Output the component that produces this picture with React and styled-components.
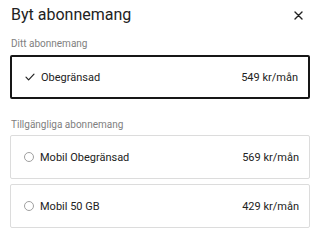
import React from 'react';
import styled, { createGlobalStyle } from 'styled-components';

const GlobalStyle = createGlobalStyle`
  body {
    margin: 0;
    background: #fff;
    font-family: Roboto, "Liberation Sans", sans-serif;
    color: #222;
  }
`;

const plans = [
  { name: 'Mobil Obegränsad', price: '569 kr/mån' },
  { name: 'Mobil 50 GB', price: '429 kr/mån' },
];

export default function App() {
  return (
    <>
      <GlobalStyle />
      <Sheet>
        <Header>
          <Title>Byt abonnemang</Title>
          <CloseButton aria-label="Stäng">
            <svg width="9" height="9" viewBox="0 0 9 9">
              <path d="M1 1L8 8M8 1L1 8" stroke="#222" strokeWidth="1.4" strokeLinecap="round" />
            </svg>
          </CloseButton>
        </Header>

        <Label>Ditt abonnemang</Label>
        <Card selected>
          <Left>
            <IconSlot>
              <svg width="10" height="8" viewBox="0 0 10 8">
                <path d="M1 4.2L3.6 6.8L9 1.2" fill="none" stroke="#222" strokeWidth="1.2" strokeLinecap="round" strokeLinejoin="round" />
              </svg>
            </IconSlot>
            <Name>Obegränsad</Name>
          </Left>
          <Price>549 kr/mån</Price>
        </Card>

        <Label second>Tillgängliga abonnemang</Label>
        <List>
          {plans.map((p) => (
            <Card key={p.name}>
              <Left>
                <IconSlot>
                  <Radio />
                </IconSlot>
                <Name>{p.name}</Name>
              </Left>
              <Price>{p.price}</Price>
            </Card>
          ))}
        </List>
      </Sheet>
    </>
  );
}

const Sheet = styled.div`
  padding: 0 10px;
  height: 228px;
  overflow: hidden;
`;

const Header = styled.div`
  display: flex;
  align-items: center;
  justify-content: space-between;
  height: 28px;
  padding: 0 1px;
`;

const Title = styled.h1`
  margin: 0;
  font-size: 16px;
  font-weight: 400;
  color: #222;
`;

const CloseButton = styled.button`
  display: flex;
  align-items: center;
  justify-content: center;
  width: 16px;
  height: 16px;
  margin: 2px 3px 0 0;
  padding: 0;
  border: 0;
  background: none;
`;

const Label = styled.div`
  margin: ${(p) => (p.second ? '20px 1px 4px' : '10px 1px 5px')};
  font-size: 10px;
  line-height: 12px;
  color: #808080;
`;

const List = styled.div`
  display: flex;
  flex-direction: column;
  gap: 5px;
`;

const Card = styled.div`
  display: flex;
  align-items: center;
  justify-content: space-between;
  box-sizing: border-box;
  height: 44px;
  padding: 0 10px 0 12px;
  border: ${(p) => (p.selected ? '2px solid #161616' : '1px solid #dcdcdc')};
  border-radius: 2px;
`;

const Left = styled.div`
  display: flex;
  align-items: center;
  gap: 6px;
`;

const IconSlot = styled.span`
  display: flex;
  align-items: center;
  justify-content: center;
  width: 11px;
  height: 11px;
`;

const Radio = styled.span`
  box-sizing: border-box;
  width: 10px;
  height: 10px;
  border: 1px solid #a0a0a0;
  border-radius: 50%;
`;

const Name = styled.span`
  font-size: 11px;
  color: #222;
`;

const Price = styled.span`
  font-size: 11px;
  color: #222;
`;
